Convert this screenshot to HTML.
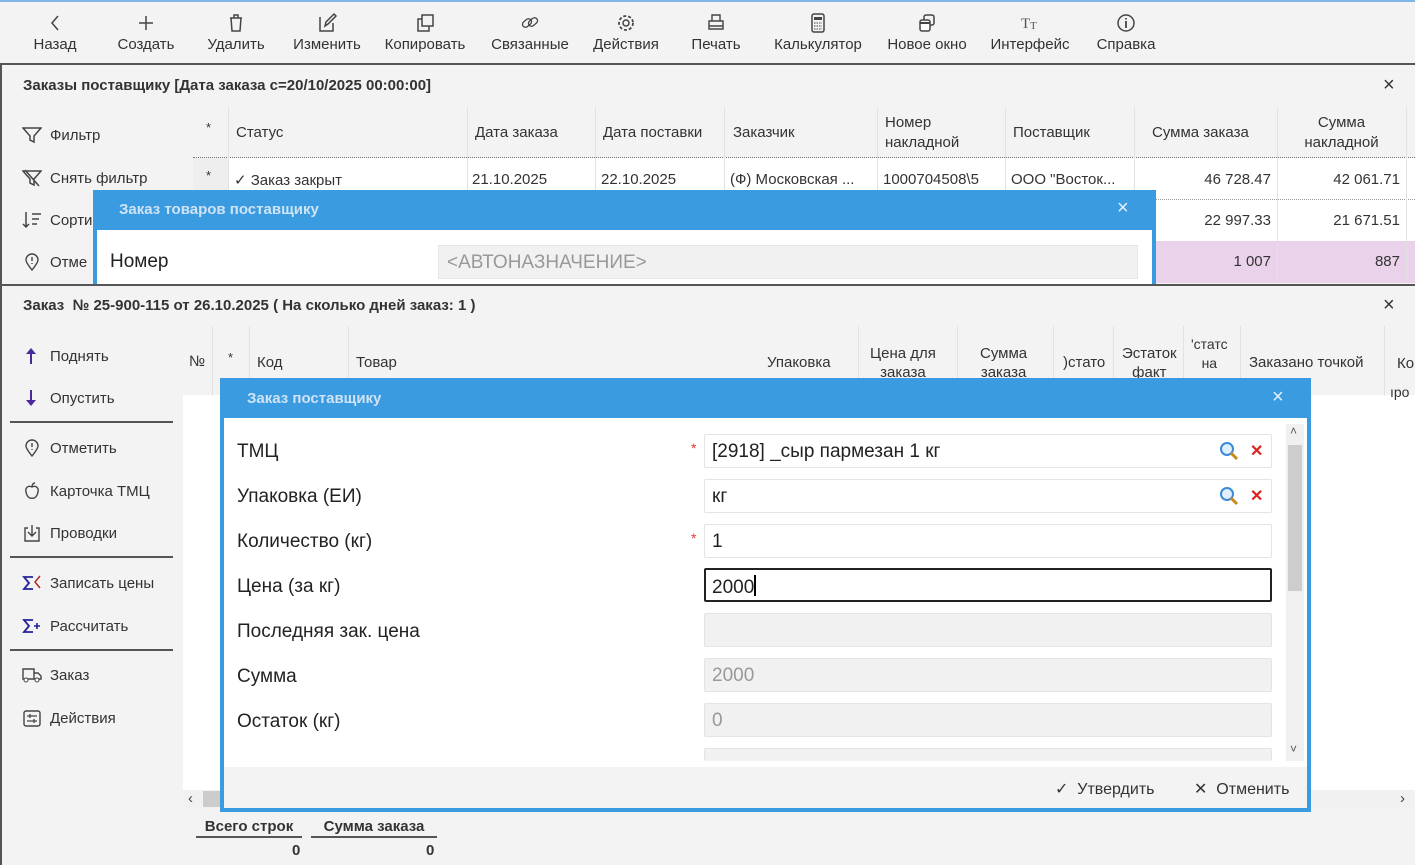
<!DOCTYPE html>
<html><head><meta charset="utf-8"><style>
*{box-sizing:border-box;margin:0;padding:0}
body{width:1415px;height:865px;overflow:hidden;background:#f3f3f3;font-family:"Liberation Sans",sans-serif;color:#333;position:relative;font-size:15px}
.a{position:absolute;white-space:nowrap}
.tb{position:absolute;top:0;left:0;width:1415px;height:65px;border-top:2px solid #7fb6e6;border-bottom:2px solid #555;background:#f3f3f3}
.ti{position:absolute;top:10px;text-align:center;font-size:15px;color:#333}
.ti svg{display:block;margin:0 auto 2px;height:22px}
.menu{font-size:15px;color:#333}
.menu svg{vertical-align:-4px;margin-right:8px}
.hd{font-size:15px;color:#444}
.sep{position:absolute;left:10px;width:163px;height:2px;background:#555}
.cell{position:absolute;font-size:15px;color:#333}
.vl{position:absolute;width:1px;background:#e2e2e2}
.inp{position:absolute;left:704px;width:568px;height:34px;background:#fff;border:1px solid #e4e4e4;border-radius:2px;font-size:19px;color:#222;padding:6px 7px}
.ro{background:#f1f1f1;color:#999}
.lbl{position:absolute;left:237px;font-size:19px;color:#222}
</style></head><body>
<div class="tb">
 <div class="ti" style="left:30px;width:50px"><svg viewBox="0 0 22 22" width="22"><path d="M14 4 L8 11 L14 18" fill="none" stroke="#444" stroke-width="1.5"/></svg>Назад</div>
 <div class="ti" style="left:113px;width:66px"><svg viewBox="0 0 22 22" width="22"><path d="M11 4V18M4 11H18" stroke="#444" stroke-width="1.5"/></svg>Создать</div>
 <div class="ti" style="left:203px;width:66px"><svg viewBox="0 0 22 22" width="22"><path d="M5 6H17M9 6V3H13V6M6 6L7 19H15L16 6" fill="none" stroke="#444" stroke-width="1.5"/></svg>Удалить</div>
 <div class="ti" style="left:289px;width:76px"><svg viewBox="0 0 22 22" width="22"><path d="M4 5V19H17V11M9 14L10 10L18 2L20 4L12 12Z" fill="none" stroke="#444" stroke-width="1.5"/></svg>Изменить</div>
 <div class="ti" style="left:365px;width:120px"><svg viewBox="0 0 22 22" width="22"><rect x="8" y="3" width="11" height="11" fill="none" stroke="#444" stroke-width="1.5"/><path d="M8 7H4V19H15V14" fill="none" stroke="#444" stroke-width="1.5"/></svg>Копировать</div>
 <div class="ti" style="left:486px;width:88px"><svg viewBox="0 0 22 22" width="22"><rect x="3" y="8" width="10" height="6" rx="3" transform="rotate(-40 8 11)" fill="none" stroke="#444" stroke-width="1.3"/><rect x="9" y="7" width="10" height="6" rx="3" transform="rotate(-40 14 10)" fill="none" stroke="#444" stroke-width="1.3"/></svg>Связанные</div>
 <div class="ti" style="left:588px;width:76px"><svg viewBox="0 0 22 22" width="22"><circle cx="11" cy="11" r="3" fill="none" stroke="#444" stroke-width="1.5"/><circle cx="11" cy="11" r="7" fill="none" stroke="#444" stroke-width="1.8" stroke-dasharray="3 2"/></svg>Действия</div>
 <div class="ti" style="left:686px;width:60px"><svg viewBox="0 0 22 22" width="22"><path d="M7 9V3H15V9M4 9H18V17H4ZM4 14H18" fill="none" stroke="#444" stroke-width="1.4"/></svg>Печать</div>
 <div class="ti" style="left:768px;width:100px"><svg viewBox="0 0 22 22" width="22"><rect x="5" y="2" width="12" height="18" rx="2" fill="none" stroke="#444" stroke-width="1.5"/><rect x="7" y="5" width="8" height="3" fill="#444"/><path d="M7 11H15M7 14H15M7 17H15" stroke="#444" stroke-width="1" stroke-dasharray="1.5 1"/></svg>Калькулятор</div>
 <div class="ti" style="left:882px;width:90px"><svg viewBox="0 0 22 22" width="22"><rect x="8" y="3" width="10" height="10" rx="2" fill="none" stroke="#444" stroke-width="1.5"/><rect x="4" y="8" width="10" height="11" rx="2" fill="#fff" stroke="#444" stroke-width="1.5"/><path d="M4 11H14" stroke="#444" stroke-width="2"/></svg>Новое окно</div>
 <div class="ti" style="left:986px;width:88px"><svg viewBox="0 0 22 22" width="22"><text x="2" y="16" font-family="Liberation Serif" font-size="15" fill="#555">T</text><text x="11" y="17" font-family="Liberation Serif" font-size="11" fill="#555">T</text></svg>Интерфейс</div>
 <div class="ti" style="left:1092px;width:68px"><svg viewBox="0 0 22 22" width="22"><circle cx="11" cy="11" r="8" fill="none" stroke="#444" stroke-width="1.5"/><path d="M11 9V16M11 6V7.5" stroke="#444" stroke-width="1.8"/></svg>Справка</div>
</div>

<!-- panel 1 -->
<div class="a" style="left:0;top:65px;width:2px;height:800px;background:#555"></div>
<div class="a" style="left:23px;top:77px;font-size:15px;font-weight:bold;color:#333">Заказы поставщику [Дата заказа с=20/10/2025 00:00:00]</div>
<div class="a" style="left:1383px;top:74px;font-size:20px;color:#333">×</div>
<div class="a menu" style="left:22px;top:126px"><svg width="20" height="18" viewBox="0 0 20 18"><path d="M1 2H19L12 10V16L8 14V10Z" fill="none" stroke="#444" stroke-width="1.5"/></svg>Фильтр</div>
<div class="a menu" style="left:22px;top:169px"><svg width="20" height="18" viewBox="0 0 20 18"><path d="M1 2H19L12 10V16L8 14V10Z M3 1L17 17" fill="none" stroke="#444" stroke-width="1.5"/></svg>Снять фильтр</div>
<div class="a menu" style="left:22px;top:211px"><svg width="20" height="18" viewBox="0 0 20 18"><path d="M4 1V16M1 13L4 16L7 13M10 3H19M10 8H17M10 13H15" fill="none" stroke="#444" stroke-width="1.5"/></svg>Сорти</div>
<div class="a menu" style="left:22px;top:253px"><svg width="20" height="18" viewBox="0 0 20 18"><path d="M10 17C6 12 4 9 4 7A6 6 0 0 1 16 7C16 9 14 12 10 17Z M10 4V8M10 10V11" fill="none" stroke="#444" stroke-width="1.4"/></svg>Отме</div>

<div class="a" style="left:193px;top:107px;width:1222px;height:51px;background:#f3f3f3;border-bottom:1px dotted #777"></div>
<div class="a" style="left:193px;top:158px;width:1222px;height:125px;background:#fff"></div>
<div class="a" style="left:193px;top:158px;width:35px;height:42px;background:#eee"></div>
<div class="a" style="left:1156px;top:241px;width:259px;height:42px;background:#ead3ea"></div>
<div class="a" style="left:193px;top:199px;width:1222px;height:1px;border-top:1px dotted #999"></div>
<div class="vl" style="left:228px;top:107px;height:176px"></div>
<div class="vl" style="left:467px;top:107px;height:176px"></div>
<div class="vl" style="left:595px;top:107px;height:176px"></div>
<div class="vl" style="left:724px;top:107px;height:176px"></div>
<div class="vl" style="left:877px;top:107px;height:176px"></div>
<div class="vl" style="left:1005px;top:107px;height:176px"></div>
<div class="vl" style="left:1134px;top:107px;height:176px"></div>
<div class="vl" style="left:1277px;top:107px;height:176px"></div>
<div class="vl" style="left:1406px;top:107px;height:176px"></div>
<div class="cell hd" style="left:206px;top:120px;font-size:13px">*</div>
<div class="cell hd" style="left:236px;top:124px">Статус</div>
<div class="cell hd" style="left:475px;top:124px">Дата заказа</div>
<div class="cell hd" style="left:603px;top:124px">Дата поставки</div>
<div class="cell hd" style="left:733px;top:124px">Заказчик</div>
<div class="cell hd" style="left:885px;top:113px;line-height:20px">Номер<br>накладной</div>
<div class="cell hd" style="left:1013px;top:124px">Поставщик</div>
<div class="cell hd" style="left:1152px;top:124px">Сумма заказа</div>
<div class="cell hd" style="left:1277px;width:129px;text-align:center;top:113px;line-height:20px">Сумма<br>накладной</div>
<div class="cell" style="left:206px;top:168px;font-size:13px">*</div>
<div class="cell" style="left:234px;top:171px">✓ Заказ закрыт</div>
<div class="cell" style="left:472px;top:171px">21.10.2025</div>
<div class="cell" style="left:601px;top:171px">22.10.2025</div>
<div class="cell" style="left:730px;top:171px">(Ф) Московская ...</div>
<div class="cell" style="left:883px;top:171px">1000704508\5</div>
<div class="cell" style="left:1011px;top:171px">ООО "Восток...</div>
<div class="cell" style="left:1134px;width:137px;text-align:right;top:171px">46 728.47</div>
<div class="cell" style="left:1277px;width:123px;text-align:right;top:171px">42 061.71</div>
<div class="cell" style="left:1134px;width:137px;text-align:right;top:212px">22 997.33</div>
<div class="cell" style="left:1277px;width:123px;text-align:right;top:212px">21 671.51</div>
<div class="cell" style="left:1134px;width:137px;text-align:right;top:253px">1 007</div>
<div class="cell" style="left:1277px;width:123px;text-align:right;top:253px">887</div>

<!-- dialog 1 -->
<div class="a" style="left:93px;top:190px;width:1063px;height:95px;background:#fff;border:4px solid #3b9be0;border-bottom:none"></div>
<div class="a" style="left:93px;top:190px;width:1063px;height:40px;background:#3b9be0"></div>
<div class="a" style="left:119px;top:201px;font-size:15px;font-weight:bold;color:#cfe3f5">Заказ товаров поставщику</div>
<div class="a" style="left:1117px;top:197px;font-size:20px;color:#e6f1fb">×</div>
<div class="a" style="left:110px;top:251px;font-size:19px;color:#222">Номер</div>
<div class="a" style="left:438px;top:245px;width:700px;height:34px;background:#f1f1f1;border:1px solid #e6e6e6;font-size:19px;color:#999;padding:6px 8px">&lt;АВТОНАЗНАЧЕНИЕ&gt;</div>

<!-- panel 2 -->
<div class="a" style="left:0;top:284px;width:1415px;height:2px;background:#555"></div>
<div class="a" style="left:23px;top:297px;font-size:15px;font-weight:bold;color:#333">Заказ&nbsp; № 25-900-115 от 26.10.2025 ( На сколько дней заказ: 1 )</div>
<div class="a" style="left:1383px;top:294px;font-size:20px;color:#333">×</div>
<div class="a menu" style="left:22px;top:347px"><svg width="20" height="18" viewBox="0 0 20 18"><path d="M9 1L4 7H8V17H10V7H14Z" fill="#4a2a9a"/></svg>Поднять</div>
<div class="a menu" style="left:22px;top:389px"><svg width="20" height="18" viewBox="0 0 20 18"><path d="M9 17L4 11H8V1H10V11H14Z" fill="#4a2a9a"/></svg>Опустить</div>
<div class="sep" style="top:421px"></div>
<div class="a menu" style="left:22px;top:439px"><svg width="20" height="18" viewBox="0 0 20 18"><path d="M10 17C6 12 4 9 4 7A6 6 0 0 1 16 7C16 9 14 12 10 17Z M10 4V8M10 10V11" fill="none" stroke="#444" stroke-width="1.4"/></svg>Отметить</div>
<div class="a menu" style="left:22px;top:482px"><svg width="20" height="18" viewBox="0 0 20 18"><path d="M10 5C6 3 3 6 4 10C5 15 8 17 10 16C12 17 15 15 16 10C17 6 14 3 10 5ZM10 5C10 3 11 1 13 1" fill="none" stroke="#444" stroke-width="1.4"/></svg>Карточка ТМЦ</div>
<div class="a menu" style="left:22px;top:524px"><svg width="20" height="18" viewBox="0 0 20 18"><path d="M6 4H3V17H17V4H14M10 1V12M6 8L10 12L14 8" fill="none" stroke="#444" stroke-width="1.4"/></svg>Проводки</div>
<div class="sep" style="top:556px"></div>
<div class="a menu" style="left:22px;top:574px"><svg width="20" height="18" viewBox="0 0 20 18"><path d="M11 3H2L7 9L2 15H11" fill="none" stroke="#22229a" stroke-width="1.8"/><path d="M18 2L13 8L18 14" fill="none" stroke="#a22" stroke-width="1.4"/></svg>Записать цены</div>
<div class="a menu" style="left:22px;top:617px"><svg width="20" height="18" viewBox="0 0 20 18"><path d="M11 3H2L7 9L2 15H11" fill="none" stroke="#22229a" stroke-width="1.8"/><path d="M12 9H18M15 6V12" stroke="#22229a" stroke-width="1.6"/></svg>Рассчитать</div>
<div class="sep" style="top:649px"></div>
<div class="a menu" style="left:22px;top:666px"><svg width="20" height="18" viewBox="0 0 20 18"><path d="M1 3H12V13H1ZM12 7H16L19 10V13H12" fill="none" stroke="#444" stroke-width="1.4"/><circle cx="4" cy="14" r="2" fill="#fff" stroke="#444"/><circle cx="15" cy="14" r="2" fill="#fff" stroke="#444"/></svg>Заказ</div>
<div class="a menu" style="left:22px;top:709px"><svg width="20" height="18" viewBox="0 0 20 18"><rect x="2" y="2" width="16" height="15" rx="2" fill="none" stroke="#444" stroke-width="1.4"/><path d="M5 7H15M5 12H15M8 5V9M12 10V14" stroke="#444" stroke-width="1.3"/></svg>Действия</div>

<div class="a" style="left:183px;top:395px;width:1232px;height:395px;background:#fff"></div>
<div class="a" style="left:183px;top:790px;width:1232px;height:18px;background:#f1f1f1"></div>
<div class="a" style="left:188px;top:790px;font-size:15px;color:#444">‹</div>
<div class="a" style="left:203px;top:791px;width:20px;height:16px;background:#ccc"></div>
<div class="a" style="left:1400px;top:790px;font-size:15px;color:#444">›</div>
<div class="vl" style="left:212px;top:326px;height:70px"></div>
<div class="vl" style="left:249px;top:326px;height:70px"></div>
<div class="vl" style="left:348px;top:326px;height:70px"></div>
<div class="vl" style="left:858px;top:326px;height:70px"></div>
<div class="vl" style="left:957px;top:326px;height:70px"></div>
<div class="vl" style="left:1053px;top:326px;height:70px"></div>
<div class="vl" style="left:1113px;top:326px;height:70px"></div>
<div class="vl" style="left:1183px;top:326px;height:70px"></div>
<div class="vl" style="left:1240px;top:326px;height:70px"></div>
<div class="vl" style="left:1384px;top:326px;height:70px"></div>
<div class="cell hd" style="left:189px;top:353px">№</div>
<div class="cell hd" style="left:228px;top:350px;font-size:13px">*</div>
<div class="cell hd" style="left:257px;top:354px">Код</div>
<div class="cell hd" style="left:356px;top:354px">Товар</div>
<div class="cell hd" style="left:767px;top:354px">Упаковка</div>
<div class="cell hd" style="left:870px;top:344px;line-height:19px;text-align:center">Цена для<br>заказа</div>
<div class="cell hd" style="left:980px;top:344px;line-height:19px;text-align:center">Сумма<br>заказа</div>
<div class="cell hd" style="left:1063px;top:354px">)стато</div>
<div class="cell hd" style="left:1122px;top:344px;line-height:19px;text-align:center">Эстаток<br>факт</div>
<div class="cell hd" style="left:1191px;top:335px;line-height:19px;text-align:center;font-size:14px">'статс<br>на</div>
<div class="cell hd" style="left:1249px;top:354px">Заказано точкой</div>
<div class="cell hd" style="left:1397px;top:344px;line-height:40px">Ко<br></div>
<div class="cell hd" style="left:1390px;top:384px;font-size:14px">ıро</div>

<div class="a" style="left:196px;top:818px;font-size:15px;font-weight:bold;color:#333;width:106px;text-align:center;border-bottom:2px solid #555;padding-bottom:1px">Всего строк</div>
<div class="a" style="left:311px;top:818px;font-size:15px;font-weight:bold;color:#333;width:126px;text-align:center;border-bottom:2px solid #555;padding-bottom:1px">Сумма заказа</div>
<div class="a" style="left:292px;top:842px;font-weight:bold;font-size:15px">0</div>
<div class="a" style="left:426px;top:842px;font-weight:bold;font-size:15px">0</div>

<!-- dialog 2 -->
<div class="a" style="left:220px;top:378px;width:1091px;height:434px;background:#fff;border:4px solid #3b9be0"></div>
<div class="a" style="left:220px;top:378px;width:1091px;height:40px;background:#3b9be0"></div>
<div class="a" style="left:247px;top:390px;font-size:15px;font-weight:bold;color:#cfe3f5">Заказ поставщику</div>
<div class="a" style="left:1272px;top:386px;font-size:20px;color:#e6f1fb">×</div>
<div class="a" style="left:224px;top:767px;width:1083px;height:41px;background:#f3f3f3"></div>
<div class="a" style="left:1055px;top:779px;font-size:16px;color:#333">✓&nbsp; Утвердить</div>
<div class="a" style="left:1194px;top:779px;font-size:16px;color:#333">✕&nbsp; Отменить</div>
<div class="a" style="left:1286px;top:424px;width:18px;height:337px;background:#f0f0f0"></div>
<div class="a" style="left:1288px;top:445px;width:14px;height:146px;background:#cdcdcd"></div>
<div class="a" style="left:1290px;top:424px;font-size:12px;color:#555">˄</div>
<div class="a" style="left:1290px;top:742px;font-size:12px;color:#555">˅</div>

<div class="lbl" style="top:441px">ТМЦ</div>
<div class="a" style="left:691px;top:440px;color:#e33;font-size:14px">*</div>
<div class="inp" style="top:434px">[2918] _сыр пармезан 1 кг</div>
<svg class="a" style="left:1219px;top:441px" width="20" height="20" viewBox="0 0 20 20"><circle cx="8" cy="8" r="6" fill="#dff0ff" stroke="#3a8ad8" stroke-width="2"/><path d="M12 12L18 18" stroke="#c98a1a" stroke-width="3"/></svg>
<div class="a" style="left:1250px;top:441px;font-size:16px;color:#d22;font-weight:bold">✕</div>
<div class="lbl" style="top:486px">Упаковка (ЕИ)</div>
<div class="inp" style="top:479px">кг</div>
<svg class="a" style="left:1219px;top:486px" width="20" height="20" viewBox="0 0 20 20"><circle cx="8" cy="8" r="6" fill="#dff0ff" stroke="#3a8ad8" stroke-width="2"/><path d="M12 12L18 18" stroke="#c98a1a" stroke-width="3"/></svg>
<div class="a" style="left:1250px;top:486px;font-size:16px;color:#d22;font-weight:bold">✕</div>
<div class="lbl" style="top:531px">Количество (кг)</div>
<div class="a" style="left:691px;top:530px;color:#e33;font-size:14px">*</div>
<div class="inp" style="top:524px">1</div>
<div class="lbl" style="top:576px">Цена (за кг)</div>
<div class="inp" style="top:568px;border:2px solid #222;padding:5px 6px">2000<span style="display:inline-block;width:2px;height:21px;background:#000;vertical-align:-3px"></span></div>
<div class="lbl" style="top:621px">Последняя зак. цена</div>
<div class="inp ro" style="top:613px"></div>
<div class="lbl" style="top:666px">Сумма</div>
<div class="inp ro" style="top:658px">2000</div>
<div class="lbl" style="top:711px">Остаток (кг)</div>
<div class="inp ro" style="top:703px">0</div>
<div class="inp ro" style="top:748px;height:12px;border-bottom:none"></div>
</body></html>
